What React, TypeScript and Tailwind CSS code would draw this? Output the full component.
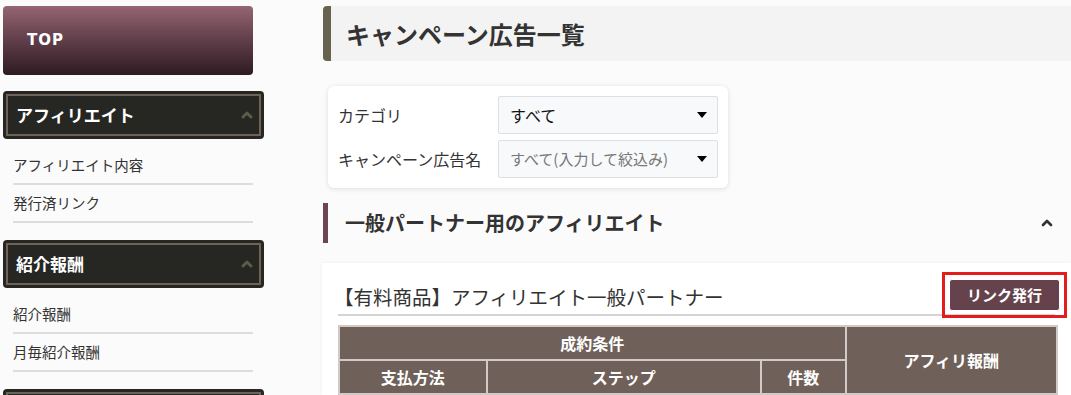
import { ChevronUp } from "lucide-react";

const jp = "font-['Noto_Sans_CJK_JP','Noto_Sans',sans-serif]";

function SideHeader({ label }: { label: string }) {
  return (
    <div className="rounded-[4px] bg-[#262622] p-[3px]">
      <div className="flex h-[42px] items-center justify-between border-2 border-[#706259] pl-[8px] pr-[4px]">
        <span className="text-[17px] font-bold text-white">{label}</span>
        <ChevronUp className="h-[16px] w-[16px] text-[#5c5c4a]" strokeWidth={4.5} />
      </div>
    </div>
  );
}

function SideItem({ label }: { label: string }) {
  return (
    <div className="ml-[10px] mr-[11px] flex h-[38px] items-center border-b-2 border-[#dddddd] text-[14.5px] text-[#333333]">
      {label}
    </div>
  );
}

function Select({ value, placeholder }: { value: string; placeholder?: boolean }) {
  return (
    <div className="flex h-[38px] w-[220px] items-center justify-between rounded-[2px] border border-[#dcdfe3] bg-[#f8f9fb] pl-[11px] pr-[10px]">
      <span className={placeholder ? "text-[15px] text-[#777777]" : "text-[16px] text-[#111111]"}>{value}</span>
      <span className="h-0 w-0 border-x-[5px] border-t-[6px] border-x-transparent border-t-black" />
    </div>
  );
}

export default function App() {
  return (
    <div className={`${jp} flex min-h-[395px] w-[1071px] overflow-hidden bg-[#fbfbfb] pl-[3px] pt-[6px]`}>
      {/* Sidebar */}
      <aside className="w-[261px] shrink-0">
        <div className="flex h-[69px] w-[250px] items-center rounded-[4px] bg-gradient-to-b from-[#956573] to-[#2f1b23] pl-[24px]">
          <span className="font-['DejaVu_Sans',sans-serif] text-[15px] font-bold tracking-[1px] text-white">TOP</span>
        </div>
        <div className="mt-[16px]">
          <SideHeader label="アフィリエイト" />
          <div className="pb-[17px] pt-[8px]">
            <SideItem label="アフィリエイト内容" />
            <SideItem label="発行済リンク" />
          </div>
          <SideHeader label="紹介報酬" />
          <div className="pb-[17px] pt-[8px]">
            <SideItem label="紹介報酬" />
            <SideItem label="月毎紹介報酬" />
          </div>
          <SideHeader label="" />
        </div>
      </aside>

      {/* Main */}
      <main className="ml-[59px] w-[748px] shrink-0">
        <div className="flex h-[55px] items-center rounded-l-[4px] border-l-8 border-[#67634e] bg-[#f3f3f3] pl-[15px]">
          <h1 className="text-[24px] font-bold text-[#333333]">キャンペーン広告一覧</h1>
        </div>

        <div className="ml-[5px] mt-[25px] flex w-[400px] flex-col gap-[6px] rounded-[6px] bg-white p-[10px] shadow-[0_1px_5px_rgba(0,0,0,0.12)]">
          <div className="flex items-center">
            <span className="w-[160px] text-[16px] text-[#333333]">カテゴリ</span>
            <Select value="すべて" />
          </div>
          <div className="flex items-center">
            <span className="w-[160px] text-[16px] text-[#333333]">キャンペーン広告名</span>
            <Select value="すべて(入力して絞込み)" placeholder />
          </div>
        </div>

        <div className="mt-[15px] flex h-[40px] w-[742px] items-center justify-between border-l-[5px] border-[#6b4550] pl-[17px] pr-[10px]">
          <h2 className="text-[20px] font-bold text-[#333333]">一般パートナー用のアフィリエイト</h2>
          <ChevronUp className="h-[16px] w-[16px] text-[#333333]" strokeWidth={4} />
        </div>

        <div className="-ml-[1px] mt-[20px] bg-white px-[16px] pt-[16px] shadow-[0_0_4px_rgba(0,0,0,0.06)]">
          <div className="flex h-[37px] items-start justify-between border-b-2 border-[#d4d4d4]">
            <span className="-ml-[4px] mt-[3px] text-[19.5px] text-[#333333]">【有料商品】アフィリエイト一般パートナー</span>
            <span className="-mr-[12px] -mt-[7px] border-[3px] border-[#e41c1c] p-[4px]">
              <button className="block h-[32px] w-[111px] rounded-[3px] border border-white bg-[#66434c] text-[15px] font-bold text-white">
                リンク発行
              </button>
            </span>
          </div>
          <table className="mt-[9px] w-[720px] border-collapse text-[16px] font-bold text-white">
            <tbody>
              <tr className="h-[34px] bg-[#6f6159]">
                <th colSpan={3} className="border-2 border-[#d2cac6] font-bold">成約条件</th>
                <th rowSpan={2} className="w-[212px] border-2 border-[#d2cac6] font-bold">アフィリ報酬</th>
              </tr>
              <tr className="h-[34px] bg-[#6f6159]">
                <th className="w-[148px] border-2 border-[#d2cac6] font-bold">支払方法</th>
                <th className="w-[275px] border-2 border-[#d2cac6] font-bold">ステップ</th>
                <th className="w-[85px] border-2 border-[#d2cac6] font-bold">件数</th>
              </tr>
            </tbody>
          </table>
        </div>
      </main>
    </div>
  );
}
